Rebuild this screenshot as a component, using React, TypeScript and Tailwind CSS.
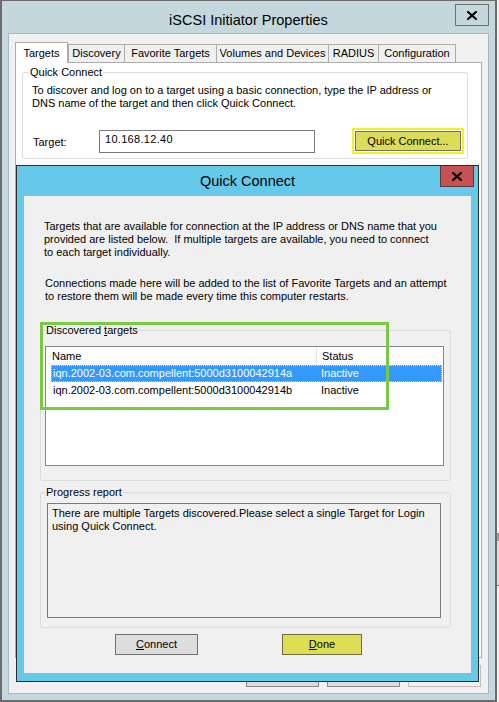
import React from "react";

const sans = "font-['Liberation_Sans',Arial,sans-serif]";

const tabs = [
  { label: "Targets", w: "w-[53px]", first: true },
  { label: "Discovery", w: "w-[57px]", first: true },
  { label: "Favorite Targets", w: "w-[92px]" },
  { label: "Volumes and Devices", w: "w-[112px]" },
  { label: "RADIUS", w: "w-[50px]" },
  { label: "Configuration", w: "w-[77px]" },
];

const targets = [
  { name: "iqn.2002-03.com.compellent:5000d3100042914a", status: "Inactive" },
  { name: "iqn.2002-03.com.compellent:5000d3100042914b", status: "Inactive" },
];

function CloseX() {
  return (
    <svg width="10" height="9" viewBox="0 0 10 9">
      <path d="M1 1 L9 8 M9 1 L1 8" stroke="#000" strokeWidth="2.2" strokeLinecap="square" />
    </svg>
  );
}

const QuickConnectDialog = () => {
  return (
    <div className="absolute left-[16px] top-[165px] w-[463px] h-[517px] border border-[#2c2c2c] bg-[#66c9ea] flex flex-col px-[7px] pb-[8px]">
      {/* title bar */}
      <div className="grid grid-cols-[1fr_auto_1fr] h-[30px] -mx-[7px]">
        <div />
        <div className="self-center text-[14.5px] leading-[18px] text-black">Quick Connect</div>
        <div className="justify-self-end mr-[4px] w-[34px] h-[21px] bg-[#c75050] border-x border-b border-[#5b3a3a] flex items-center justify-center">
          <CloseX />
        </div>
      </div>

      <div className="relative flex-1 bg-[#f0f0f0] flex flex-col">
        <p className="pt-[24px] pl-[20px]">
          Targets that are available for connection at the IP address or DNS name that you
          <br />
          provided are listed below.{"\u00a0"} If multiple targets are available, you need to connect
          <br />
          to each target individually.
        </p>
        <p className="mt-[18px] pl-[21px]">
          Connections made here will be added to the list of Favorite Targets and an attempt
          <br />
          to restore them will be made every time this computer restarts.
        </p>

        <fieldset className="mt-[21px] ml-[16px] w-[411px] border border-[#d6dcdf] rounded-[3px]">
          <legend className="ml-[4px] px-[1px]">
            Discovered <span className="underline">t</span>argets
          </legend>
          <div className="mt-[9px] ml-[4px] mb-[14px] w-[399px] h-[120px] border border-[#828790] bg-white">
            <div className="flex h-[18px] bg-gradient-to-b from-white to-[#fafafa]">
              <div className="w-[271px] pl-[6px] flex items-center border-r border-[#e3e5e7]">Name</div>
              <div className="pl-[5px] flex items-center">Status</div>
            </div>
            {targets.map((t, i) => (
              <div
                key={t.name}
                className={
                  i === 0
                    ? "ml-[5px] mr-[1px] h-[17px] flex items-center bg-[#3399ff] text-white border border-dotted border-[#bcd9ff]"
                    : "ml-[5px] mr-[1px] h-[17px] flex items-center border border-transparent"
                }
              >
                <div className="w-[269px] pl-px">{t.name}</div>
                <div>{t.status}</div>
              </div>
            ))}
          </div>
        </fieldset>

        <fieldset className="mt-[5px] ml-[16px] w-[411px] border border-[#d6dcdf] rounded-[3px]">
          <legend className="ml-[4px] px-[1px]">Progress report</legend>
          <div className="mt-[4px] ml-[6px] mb-[9px] w-[394px] h-[115px] border border-[#7a7a7a] pt-[3px] pl-[4px]">
            There are multiple Targets discovered.Please select a single Target for Login
            <br />
            using Quick Connect.
          </div>
        </fieldset>

        <div className="mt-[6px] flex">
          <div className="ml-[91px] w-[83px] h-[21px] border border-[#707070] bg-[#dddddd] flex items-center justify-center">
            <span>
              <span className="underline">C</span>onnect
            </span>
          </div>
          <div className="ml-[84px] w-[80px] h-[21px] border border-[#6f6f3c] bg-[#dedd55] flex items-center justify-center">
            <span>
              <span className="underline">D</span>one
            </span>
          </div>
        </div>

        {/* green annotation box */}
        <div className="absolute left-[16px] top-[126px] w-[349px] h-[88px] border-[3px] border-[#7ac943] pointer-events-none" />
      </div>
    </div>
  );
};

export default function App() {
  return (
    <div className={`relative w-[499px] h-[702px] overflow-hidden flex bg-[#f0f0f0] ${sans} text-[11px] leading-[13px] text-black`}>
      {/* main window */}
      <div className="w-[497px] h-[702px] shrink-0 flex flex-col bg-[#c4d7dc] border-x-2 border-b-2 border-t border-[#6c6c6c] px-[6px] pb-[6px]">
        <div className="grid grid-cols-[1fr_auto_1fr] h-[32px] -mx-[6px] px-[6px]">
          <div />
          <div className="pt-[10px] text-[14.5px] leading-[18px]">iSCSI Initiator Properties</div>
          <div className="justify-self-end mt-[3px] w-[34px] h-[22px] border border-[#6f6f6f] flex items-center justify-center">
            <CloseX />
          </div>
        </div>

        <div className="flex-1 bg-[#f0f0f0] border border-[#a9b8be] flex flex-col">
          {/* tabs */}
          <div className="mt-[8px] ml-[6px] flex items-end h-[20px]">
            {tabs.map((t, i) =>
              i === 0 ? (
                <div
                  key={t.label}
                  className={`${t.w} h-[21px] -mb-px relative z-10 bg-white border-x border-t border-[#acacac] flex items-center justify-center`}
                >
                  {t.label}
                </div>
              ) : (
                <div
                  key={t.label}
                  className={`${t.w} h-[18px] bg-[#f0f0f0] border-t border-r border-[#acacac] ${t.first ? "border-l" : ""} flex items-center justify-center`}
                >
                  {t.label}
                </div>
              )
            )}
          </div>

          {/* tab panel */}
          <div className="ml-[6px] w-[467px] h-[596px] border border-[#acacac] bg-white">
            <fieldset className="mt-[3px] ml-[6px] w-[446px] border border-[#dcdcdc] rounded-[3px]">
              <legend className="ml-[6px] px-[1px]">Quick Connect</legend>
              <div className="px-[9px] pt-[5px]">
                To discover and log on to a target using a basic connection, type the IP address or
                <br />
                DNS name of the target and then click Quick Connect.
              </div>
              <div className="mt-[18px] mb-[4px] flex items-center h-[26px] pl-[10px]">
                <div className="w-[66px] pt-[2px]">Target:</div>
                <div className="w-[216px] h-[23px] border border-[#7a7a7a] bg-white pl-[5px] pt-[2px] tracking-[0.3px]">
                  10.168.12.40
                </div>
                <div className="ml-[37px] w-[112px] h-[26px] border-2 border-[#f2f21c] p-px">
                  <div className="w-full h-full border border-[#707070] bg-[#dcdc5a] flex items-center justify-center">
                    Quick Connect...
                  </div>
                </div>
              </div>
            </fieldset>
          </div>

          {/* dialog buttons behind the popup */}
          <div className="mt-[7px] mr-[7px] flex justify-end gap-[8px]">
            <div className="w-[73px] h-[22px] border border-[#8a8a8a] bg-[#dcdcdc] flex items-center justify-center">OK</div>
            <div className="w-[73px] h-[22px] border border-[#8a8a8a] bg-[#dcdcdc] flex items-center justify-center">Cancel</div>
            <div className="w-[73px] h-[22px] border border-[#bfbfbf] bg-[#f0f0f0] flex items-center justify-center text-[#a0a0a0]">Apply</div>
          </div>
        </div>
      </div>

      {/* sliver of the window behind */}
      <div className="flex-1 flex flex-col">
        <div className="h-[533px]" />
        <div className="h-[8px] bg-[#9c9c9c]" />
        <div className="h-[44px] bg-[#dadada]" />
        <div className="h-px bg-[#707070]" />
      </div>

      <QuickConnectDialog />
    </div>
  );
}
